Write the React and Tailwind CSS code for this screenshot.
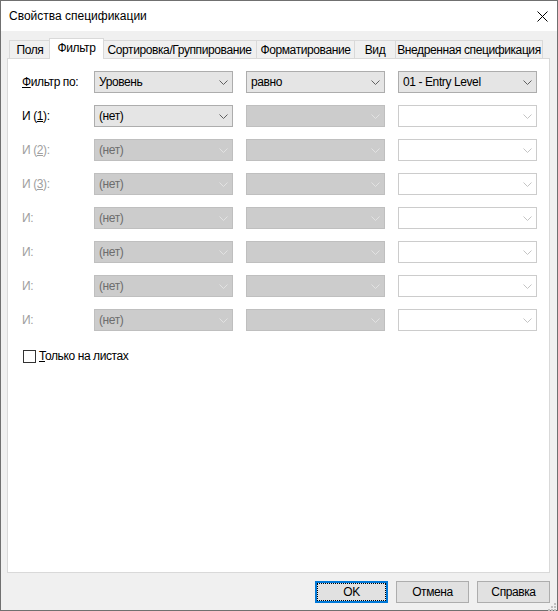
import React from 'react';

const font = { fontFamily: '"Segoe UI", "Liberation Sans", Arial, sans-serif', letterSpacing: '-0.4px' };

const Chevron = ({ tone }) => {
    const colors = { on: '#606060', off: '#e2e2e2', blank: '#c4c4c4' };
    return (
        <svg width="9" height="5" viewBox="0 0 9 5" className="shrink-0">
            <path d="M0.5 0.5 L4.5 4.5 L8.5 0.5" fill="none" stroke={colors[tone]} strokeWidth="1" />
        </svg>
    );
};

// variant: on = enabled combo, off = disabled combo, blank = disabled white combo
const Combo = ({ value, variant = 'on' }) => {
    const styles = {
        on: 'bg-[#e5e5e5] border-[#adadad] text-black',
        off: 'bg-[#cccccc] border-[#bfbfbf] text-[#6d6d6d]',
        blank: 'bg-white border-[#cccccc] text-black',
    };
    return (
        <div className={`flex items-center justify-between h-[22px] w-[139px] border pl-[4px] pr-[4px] text-[12px] ${styles[variant]}`}>
            <span className="leading-none">{value}</span>
            <Chevron tone={variant} />
        </div>
    );
};

const Label = ({ children, disabled }) => (
    <div className={`text-[12px] ${disabled ? 'text-[#a0a0a0]' : 'text-black'}`}>{children}</div>
);

const rows = [
    { label: <><u>Ф</u>ильтр по:</>, cells: [['Уровень', 'on'], ['равно', 'on'], ['01 - Entry Level', 'on']] },
    { label: <>И (<u>1</u>):</>, cells: [['(нет)', 'on'], ['', 'off'], ['', 'blank']] },
    { label: <>И (<u>2</u>):</>, disabled: true, cells: [['(нет)', 'off'], ['', 'off'], ['', 'blank']] },
    { label: <>И (<u>3</u>):</>, disabled: true, cells: [['(нет)', 'off'], ['', 'off'], ['', 'blank']] },
    { label: 'И:', disabled: true, cells: [['(нет)', 'off'], ['', 'off'], ['', 'blank']] },
    { label: 'И:', disabled: true, cells: [['(нет)', 'off'], ['', 'off'], ['', 'blank']] },
    { label: 'И:', disabled: true, cells: [['(нет)', 'off'], ['', 'off'], ['', 'blank']] },
    { label: 'И:', disabled: true, cells: [['(нет)', 'off'], ['', 'off'], ['', 'blank']] },
];

const Tab = ({ children, active, className = '' }) => (
    <div
        className={`flex shrink-0 items-center justify-center border border-b-0 border-[#d9d9d9] text-[12px] whitespace-nowrap ${
            active ? 'h-[21px] bg-white relative z-10 -mb-px pb-[2px]' : 'h-[18px] bg-[#f0f0f0]'
        } ${className}`}
    >
        {children}
    </div>
);

const Button = ({ children, primary }) => (
    <div
        className={`flex items-center justify-center w-[73px] h-[22px] bg-[#e1e1e1] text-[12px] ${
            primary ? 'border-2 border-[#0078d7]' : 'border border-[#adadad]'
        }`}
    >
        {primary ? (
            <div className="flex items-center justify-center w-full h-full border border-dotted border-black">{children}</div>
        ) : (
            children
        )}
    </div>
);

export default function App() {
    return (
        <div className="w-[558px] h-[611px] flex flex-col border border-[#707070] bg-[#f0f0f0] text-black" style={font}>
            {/* Title bar */}
            <div className="h-[30px] bg-white flex items-center justify-between pl-[8px] pr-[9px] shrink-0">
                <span className="text-[12px] tracking-normal">Свойства спецификации</span>
                <svg width="11" height="11" viewBox="0 0 11 11">
                    <path d="M0.5 0.5 L10.5 10.5 M10.5 0.5 L0.5 10.5" stroke="#000" strokeWidth="1" />
                </svg>
            </div>

            {/* Body */}
            <div className="flex-1 flex flex-col pt-[7px] pl-[6px] pr-[7px]">
                {/* Tabs */}
                <div className="flex items-end pl-[2px]">
                    <Tab className="w-[42px]">Поля</Tab>
                    <Tab active className="w-[55px] -ml-[2px]">Фильтр</Tab>
                    <Tab className="w-[155px] -ml-[2px]">Сортировка/Группирование</Tab>
                    <Tab className="w-[99px] -ml-px">Форматирование</Tab>
                    <Tab className="w-[42px] -ml-px">Вид</Tab>
                    <Tab className="w-[148px] -ml-px">Внедренная спецификация</Tab>
                </div>

                {/* Panel */}
                <div className="h-[515px] bg-white border border-[#d9d9d9] pt-[12px] pl-[14px]">
                    <div className="flex flex-col gap-[12px]">
                        {rows.map((r, i) => (
                            <div key={i} className="flex items-center h-[22px]">
                                <div className="w-[72px]">
                                    <Label disabled={r.disabled}>{r.label}</Label>
                                </div>
                                <div className="flex gap-[13px]">
                                    {r.cells.map(([v, variant], j) => (
                                        <Combo key={j} value={v} variant={variant} />
                                    ))}
                                </div>
                            </div>
                        ))}
                    </div>

                    <div className="flex items-center mt-[16px] ml-[1px] gap-[3px]">
                        <div className="w-[13px] h-[13px] border border-[#333333] bg-white" />
                        <span className="text-[12px]">
                            <u>Т</u>олько на листах
                        </span>
                    </div>
                </div>

                {/* Buttons */}
                <div className="flex justify-end gap-[8px] mt-[8px]">
                    <Button primary>OK</Button>
                    <Button>Отмена</Button>
                    <Button>Справка</Button>
                </div>
                <div className="flex justify-end mt-[0px] -mr-[6px]">
                    <svg width="8" height="8" viewBox="0 0 8 8">
                        <rect x="6" y="0" width="2" height="2" fill="#c0c0c0" />
                        <rect x="3" y="3" width="2" height="2" fill="#c0c0c0" />
                        <rect x="6" y="3" width="2" height="2" fill="#c0c0c0" />
                        <rect x="0" y="6" width="2" height="2" fill="#c0c0c0" />
                        <rect x="3" y="6" width="2" height="2" fill="#c0c0c0" />
                        <rect x="6" y="6" width="2" height="2" fill="#c0c0c0" />
                    </svg>
                </div>
            </div>
        </div>
    );
}
